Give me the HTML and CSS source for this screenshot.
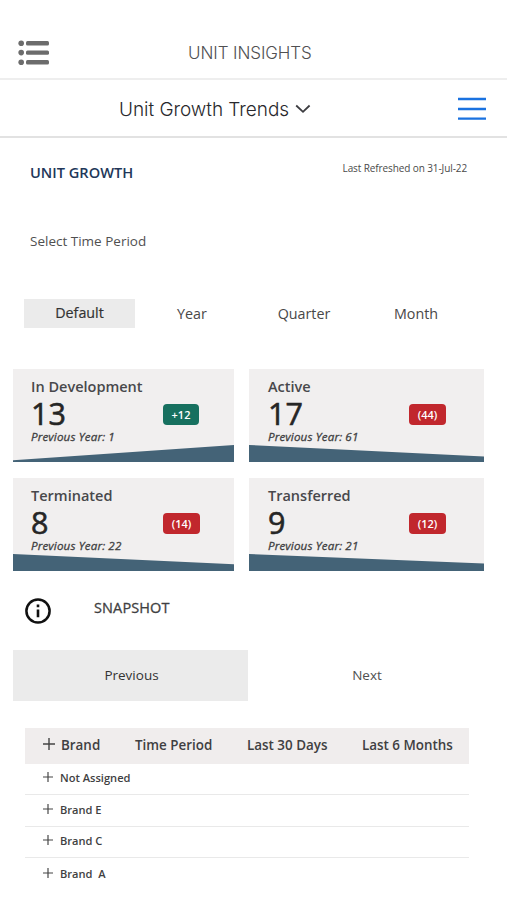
FILE: index.html
```html
<!DOCTYPE html>
<html lang="en">
<head>
<meta charset="utf-8">
<title>Unit Insights</title>
<link rel="stylesheet" href="styles.css">
</head>
<body>
<header class="topbar">
  <svg class="list-icon" width="32" height="26" viewBox="0 0 32 26"><g fill="#6c6c6c"><circle cx="3.2" cy="3.2" r="2.8"/><circle cx="3.2" cy="12.6" r="2.8"/><circle cx="3.2" cy="22.2" r="2.8"/><rect x="8" y="1" width="23" height="4.4" rx="1.5"/><rect x="8" y="10.4" width="23" height="4.4" rx="1.5"/><rect x="8" y="20" width="23" height="4.4" rx="1.5"/></g></svg>
  <span class="app-title">UNIT INSIGHTS</span>
</header>
<nav class="subbar">
  <span class="page-title">Unit Growth Trends</span>
  <svg class="chevron" width="16" height="10" viewBox="0 0 16 10"><path d="M1.2 1.5 8 7.8 14.6 1.5" fill="none" stroke="#3c3c40" stroke-width="1.8"/></svg>
  <svg class="menu-icon" width="28" height="24" viewBox="0 0 28 24"><path d="M0 2h28M0 12h28M0 21.7h28" stroke="#1a72e0" stroke-width="2.3"/></svg>
</nav>
<main>
  <div class="heading">
    <h1>UNIT GROWTH</h1>
    <span class="refreshed">Last Refreshed on 31-Jul-22</span>
  </div>
  <p class="select-label">Select Time Period</p>
  <div class="periods">
    <button class="period active"><span>Default</span></button>
    <button class="period"><span>Year</span></button>
    <button class="period"><span>Quarter</span></button>
    <button class="period"><span>Month</span></button>
  </div>
  <section class="cards">
    <article class="card">
      <h2>In Development</h2>
      <div class="figure"><strong>13</strong><span class="badge up">+12</span></div>
      <p>Previous Year: 1</p>
      <svg class="trend" viewBox="0 0 100 17" preserveAspectRatio="none"><path d="M0 15.2 100 0V17H0Z"/></svg>
    </article>
    <article class="card">
      <h2>Active</h2>
      <div class="figure"><strong>17</strong><span class="badge">(44)</span></div>
      <p>Previous Year: 61</p>
      <svg class="trend" viewBox="0 0 100 17" preserveAspectRatio="none"><path d="M0 0 100 11.6V17H0Z"/></svg>
    </article>
    <article class="card">
      <h2>Terminated</h2>
      <div class="figure"><strong>8</strong><span class="badge">(14)</span></div>
      <p>Previous Year: 22</p>
      <svg class="trend" viewBox="0 0 100 17" preserveAspectRatio="none"><path d="M0 0 100 10.3V17H0Z"/></svg>
    </article>
    <article class="card">
      <h2>Transferred</h2>
      <div class="figure"><strong>9</strong><span class="badge">(12)</span></div>
      <p>Previous Year: 21</p>
      <svg class="trend" viewBox="0 0 100 17" preserveAspectRatio="none"><path d="M0 0 100 9.5V17H0Z"/></svg>
    </article>
  </section>
  <div class="snapshot">
    <svg width="26" height="26" viewBox="0 0 26 26"><circle cx="13" cy="13" r="11.6" fill="none" stroke="#111" stroke-width="2.5"/><path d="M13 6.4v2.8M13 11.6v7.6" stroke="#111" stroke-width="2.6"/></svg>
    <h3>SNAPSHOT</h3>
  </div>
  <div class="pager">
    <button class="page active">Previous</button>
    <button class="page">Next</button>
  </div>
  <div class="table">
    <div class="row head">
      <svg class="plus" viewBox="0 0 12 12"><path d="M6 0v12M0 6h12"/></svg>
      <span class="c1">Brand</span><span class="c2">Time Period</span><span class="c3">Last 30 Days</span><span class="c4">Last 6 Months</span>
    </div>
    <div class="row"><svg class="plus" viewBox="0 0 12 12"><path d="M6 0v12M0 6h12"/></svg><span>Not Assigned</span></div>
    <div class="row"><svg class="plus" viewBox="0 0 12 12"><path d="M6 0v12M0 6h12"/></svg><span>Brand E</span></div>
    <div class="row"><svg class="plus" viewBox="0 0 12 12"><path d="M6 0v12M0 6h12"/></svg><span>Brand C</span></div>
    <div class="row"><svg class="plus" viewBox="0 0 12 12"><path d="M6 0v12M0 6h12"/></svg><span>Brand&nbsp; A</span></div>
  </div>
</main>
</body>
</html>
```
FILE: styles.css
```css
* { box-sizing: border-box; }
body { margin: 0; width: 507px; height: 900px; overflow: hidden; background: #fff; color: #3f3f42; font-family: "Open Sans", "Noto Sans", sans-serif; }
h1, h2, h3, p { margin: 0; }
button { border: 0; padding: 0; background: none; font: inherit; color: inherit; }
svg { display: block; flex: none; }

.topbar { height: 80px; border-bottom: 2px solid #eeeeee; display: flex; align-items: flex-start; padding: 40px 0 0 18px; font-family: Inter, sans-serif; }
.app-title { margin-left: 138px; font-size: 17px; line-height: 26px; font-weight: 300; color: #505052; letter-spacing: -0.08px; white-space: nowrap; }
.subbar { height: 58px; border-bottom: 2px solid #e2e2e2; display: flex; align-items: center; padding: 1px 0 0 119px; font-family: Inter, sans-serif; }
.page-title { font-size: 19px; line-height: 26px; font-weight: 300; color: #28282c; width: 170px; white-space: nowrap; letter-spacing: -0.04px; padding-top: 2px; }
.chevron { margin-left: 6px; }
.menu-icon { margin-left: 147px; }

.heading { display: flex; justify-content: space-between; padding: 23px 40px 0 30px; height: 92px; }
h1 { font-size: 14.6px; line-height: 22px; font-weight: 600; color: #213759; }
.refreshed { font-size: 10px; line-height: 15px; letter-spacing: -0.1px; color: #4a4a4a; }
.select-label { padding-left: 30px; font-size: 13.5px; line-height: 23px; color: #505050; }
.periods { display: flex; margin: 46px 0 0 24px; }
.period { width: 112px; height: 29px; font-size: 14.3px; line-height: 28px; color: #484848; }
.period.active span { display: block; width: 111px; height: 29px; background: #ebebeb; color: #333; -webkit-text-stroke: 0.2px; }

.cards { display: grid; grid-template-columns: 221px 235px; gap: 16px 15px; margin: 41px 0 0 13px; }
.card { position: relative; height: 93px; padding: 8px 0 0 18px; background: #f1efef; }
.card h2 { font-size: 14.5px; line-height: 20px; font-weight: 600; color: #48484b; }
.figure { display: flex; align-items: center; height: 34px; justify-content: space-between; padding-right: 34px; }
.card:nth-child(even) { padding-left: 19px; }
.card:nth-child(even) .figure { padding-right: 38px; }
.figure strong { font-size: 30.5px; line-height: 32px; padding-bottom: 2px; font-weight: 400; color: #262626; -webkit-text-stroke: 0.6px; }
.badge { width: 37px; height: 21px; border-radius: 4px; background: #c1272d; color: #fff; font-size: 11px; line-height: 21px; font-weight: 600; text-align: center; }
.badge.up { width: 36px; margin-right: 1px; background: #17705f; }
.card p { font-size: 11.6px; line-height: 12px; font-style: italic; letter-spacing: 0.15px; -webkit-text-stroke: 0.3px; }
.trend { position: absolute; left: 0; bottom: 0; width: 100%; height: 17px; fill: #446377; }

.snapshot { display: flex; align-items: flex-start; padding: 27px 0 0 25px; height: 79px; }
h3 { margin-left: 43px; font-size: 14.5px; line-height: 20px; font-weight: 400; letter-spacing: 0.12px; -webkit-text-stroke: 0.3px; }
.pager { display: flex; margin-left: 13px; }
.page { width: 236px; height: 51px; padding: 0 0 2px 2px; font-size: 13.5px; color: #505050; }
.page.active { width: 235px; background: #ebebeb; color: #333; }

.table { width: 444px; margin: 27px 0 0 25px; }
.row { display: flex; align-items: center; height: 31.6px; padding: 0 0 2px 18px; border-bottom: 1px solid #e9e9e9; font-size: 11.1px; font-weight: 600; }
.row:last-child { border: 0; }
.row .plus { width: 10px; height: 10px; margin: 0 7px 1px 0; }
.plus path { stroke: #444; stroke-width: 1.4; fill: none; }
.row.head { height: 35.5px; border: 0; background: #f0eded; font-size: 13.4px; padding-bottom: 1px; }
.row.head .plus { width: 12px; height: 12px; margin: 0 6px 2px 0; }
.head span { white-space: nowrap; }
.c1 { width: 74px; }
.c2 { width: 112px; }
.c3 { width: 115px; }
```
